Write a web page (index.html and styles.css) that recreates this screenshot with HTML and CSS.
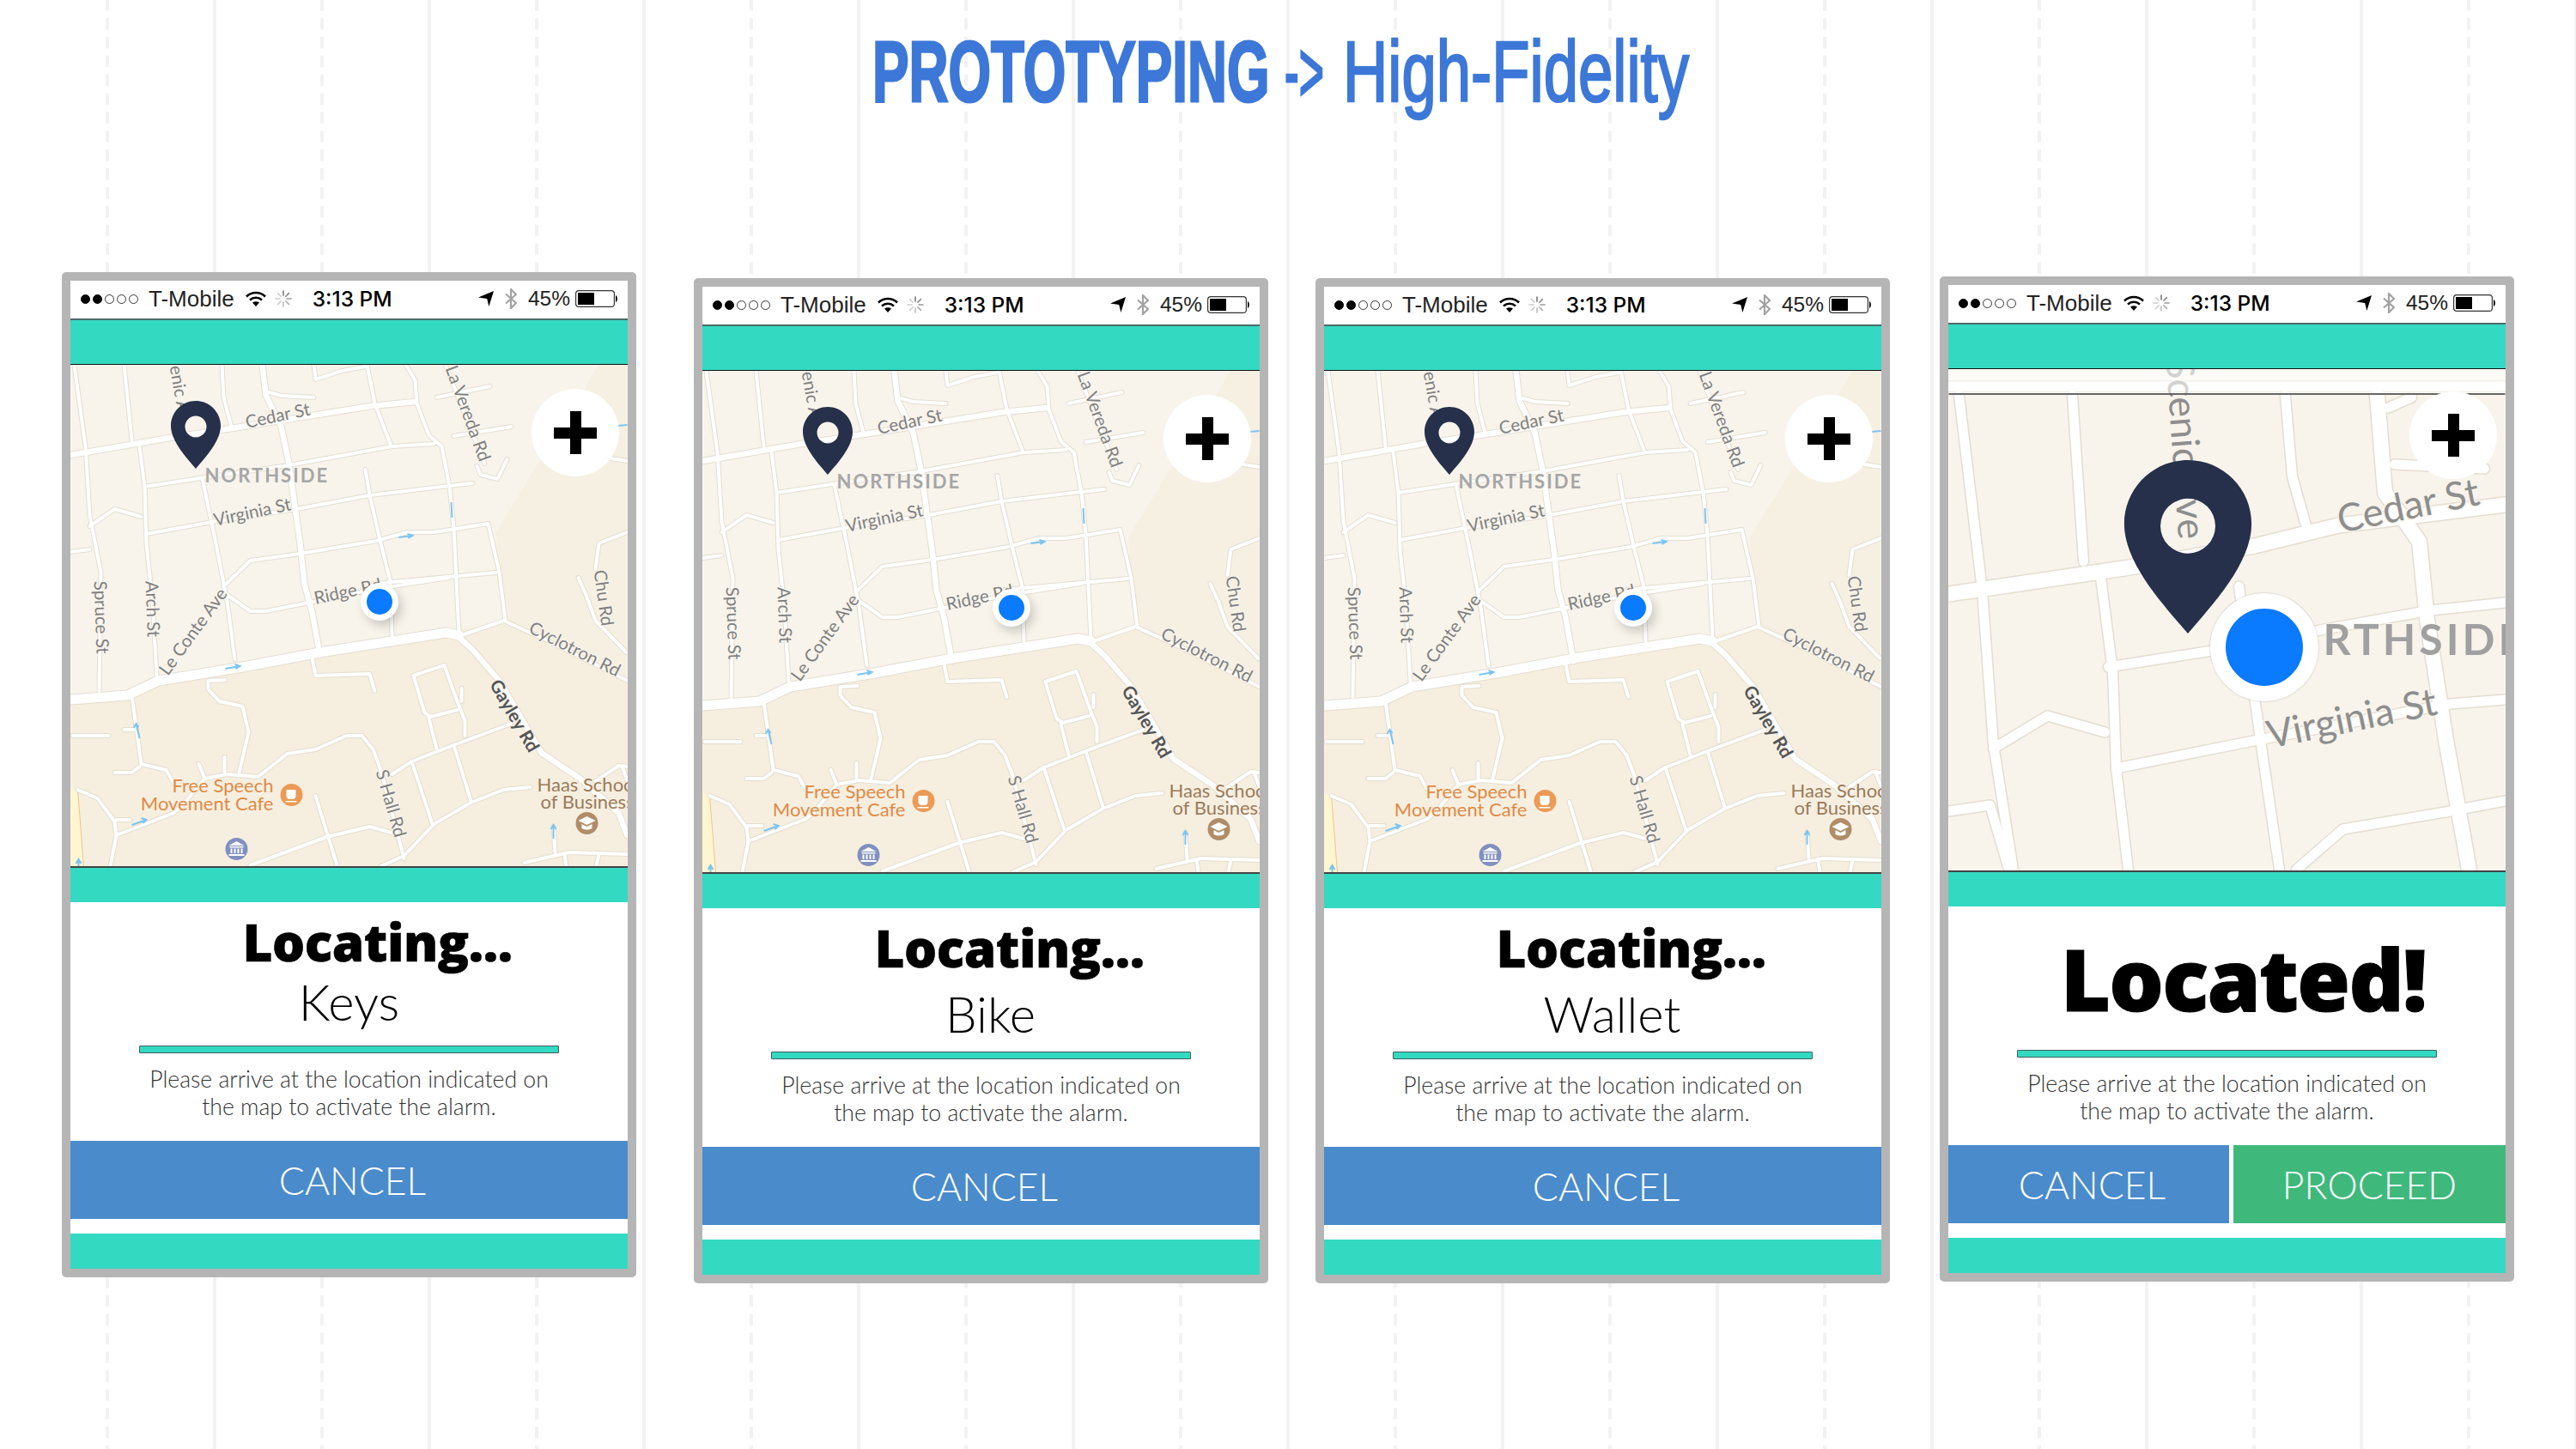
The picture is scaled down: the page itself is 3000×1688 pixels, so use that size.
FILE: index.html
```html
<!DOCTYPE html>
<html lang="en">
<head>
  <meta charset="UTF-8">
  <title>Prototyping - High-Fidelity</title>
  <link rel="stylesheet" href="styles.css">
</head>
<body>

  <!-- page background guides, and shared map + status bar drawings -->
  <svg class="guides" width="3000" height="1688">
    <defs>
      <pattern id="guide-tile" patternUnits="userSpaceOnUse" x="-2" y="-0.88" width="250" height="21.88">
        <rect x="0" y="0" width="4" height="21.88" fill="#f2f2f2"/>
        <rect x="125" y="0" width="4" height="13.5" fill="#f2f2f2"/>
      </pattern>
    </defs>
    <rect x="2" y="0" width="2998" height="1688" fill="url(#guide-tile)"/>
  </svg>

  <svg class="sprite">
    <defs>
      <symbol id="i-wifi" viewBox="0 0 24 18">
        <path d="M1 6.5C7 .5 17 .5 23 6.5" fill="none" stroke="#000" stroke-width="2.6"/>
        <path d="M5 10.5C9 6.8 15 6.8 19 10.5" fill="none" stroke="#000" stroke-width="2.6"/>
        <path d="M12 18L8 13.6C10.5 11.8 13.5 11.8 16 13.6Z"/>
      </symbol>
      <symbol id="i-spin" viewBox="0 0 20 20">
        <g stroke-width="1.6" stroke-linecap="round">
          <path d="M10 1V6" stroke="#777"/>
          <path d="M16.4 3.6L12.8 7.2" stroke="#888"/>
          <path d="M19 10H14" stroke="#999"/>
          <path d="M16.4 16.4L12.8 12.8" stroke="#aaa"/>
          <path d="M10 19V14" stroke="#bbb"/>
          <path d="M3.6 16.4L7.2 12.8" stroke="#ccc"/>
          <path d="M1 10H6" stroke="#ccc"/>
          <path d="M3.6 3.6L7.2 7.2" stroke="#ccc"/>
        </g>
      </symbol>
      <symbol id="i-arrow" viewBox="0 0 18 18">
        <path d="M0 7.4L18 0L12.4 18L10.2 9Z"/>
      </symbol>
      <symbol id="i-bt" viewBox="0 0 14 24">
        <path d="M1 6.5L13 17L7 23V1L13 7L1 17.5" fill="none" stroke="#a2a2a2" stroke-width="2.2"/>
      </symbol>
      <symbol id="i-battery" viewBox="0 0 50 20">
        <rect x=".6" y=".6" width="44.8" height="18.8" rx="3.5" fill="#fff" stroke="#333" stroke-width="1.2"/>
        <rect x="3" y="3" width="19" height="14" fill="#000"/>
        <path d="M47 6C49.500 6.500 49.500 13.500 47 14Z"/>
      </symbol>

      <!-- campus map at street zoom -->
      <g id="map-thin">
        <path d="M4 0L17 95L22 175L35 242L33 380"/>
        <path d="M62 0L71 88"/>
        <path d="M80 95L86 142L88 208L95 275L100 362"/>
        <path d="M176 0L178 38L187 72"/>
        <path d="M283 0L285 17L316 7L343 2"/>
        <path d="M345 0L354 45L372 92"/>
        <path d="M390 0L401 18L403 45L417 82L432 95L441 142L446 190L452 312"/>
        <path d="M86 142L151 132L254 117L374 95L423 92"/>
        <path d="M88 197L165 183L263 168L348 152L432 142L468 138"/>
        <path d="M153 132L169 208L182 275L191 343"/>
        <path d="M343 122L348 152L361 208L372 252L374 315"/>
        <path d="M178 258L209 228L267 220L356 205L392 195L423 195L486 185L499 242L506 298"/>
        <path d="M352 255L495 242"/>
        <path d="M178 265L209 287L227 287L272 278L350 262L440 248"/>
        <path d="M22 188L51 168L82 177"/>
        <path d="M0 218L22 215"/>
        <path d="M231 32L245 36L283 38"/>
        <path d="M426 38L488 25"/>
        <path d="M446 83L513 72"/>
        <path d="M437 2L482 115"/>
        <path d="M473 118L477 128L497 133L508 110"/>
        <path d="M622 108L648 112"/>
        <path d="M648 195L615 208L611 238"/>
        <path d="M591 248L600 268L611 298L647 335"/>
        <path d="M71 385L82 465L111 472L120 488"/>
        <path d="M2 432L44 432"/>
        <path d="M62 425L76 425"/>
        <path d="M51 475L71 475L80 468"/>
        <path d="M180 367L160 368L160 378L173 392L200 398L207 428L196 475"/>
        <path d="M281 342L285 362L348 360L354 380"/>
        <path d="M53 548L120 522L131 512L156 482L182 477L218 480L252 453L285 448L321 432L339 432L352 448L361 472L388 575"/>
        <path d="M149 465L156 482"/>
        <path d="M179 457L179 477"/>
        <path d="M399 362L435 350L450 392L459 415L459 432"/>
        <path d="M399 362L412 405L419 410L450 402"/>
        <path d="M417 412L426 447"/>
        <path d="M455 377L455 392"/>
        <path d="M513 418L446 443L397 462L374 477"/>
        <path d="M397 462L421 535"/>
        <path d="M446 443L466 508"/>
        <path d="M535 492L504 495L466 510L423 535L388 572L361 584"/>
        <path d="M209 583L298 550L348 538L374 545"/>
        <path d="M285 502L310 583"/>
        <path d="M8 495L31 505L51 532L53 548L46 584"/>
        <path d="M53 530L69 530"/>
        <path d="M528 580L580 568L647 570"/>
        <path d="M562 538L564 568"/>
        <path d="M575 570L577 584"/>
        <path d="M615 570L612 584"/>
        <path d="M611 485L638 467L648 468"/>
        <path d="M642 468L648 484"/>
        <path d="M455 315L504 298L557 322L648 368"/>
      </g>
      <g id="map-mid">
        <path d="M0 105L115 85L200 72L350 48L401 43"/>
        <path d="M223 0L227 35L245 72L254 115L267 208L272 255L281 288L290 338"/>
        <path d="M446 312L468 332L499 368L548 452L593 482L638 522L648 548"/>
      </g>
      <g id="map-wide">
        <path d="M0 390L66 385L102 368L200 352L290 335L437 312L452 315"/>
      </g>
      <g id="map-north">
        <rect width="648" height="584" fill="#f8f4ec"/>
        <path d="M615 0H648V368L557 322L504 298L495 195Z" fill="#f6f0e3"/>
        <path d="M0 390L66 385L102 368L200 352L290 335L437 312L504 298L557 322L648 368V584H0Z" fill="#f6efe0"/>
        <path d="M0 492L8 495L15 584H0Z" fill="#fdf6d0"/>
        <path d="M8 495L15 584" fill="none" stroke="#f4c48c" stroke-width="1"/>
        <use href="#map-thin" class="case case-thin"/>
        <use href="#map-mid" class="case case-mid"/>
        <use href="#map-wide" class="case case-wide"/>
        <use href="#map-thin" class="road road-thin"/>
        <use href="#map-mid" class="road road-mid"/>
        <use href="#map-wide" class="road road-wide"/>
        <g class="flow">
          <path d="M382 201L398 199M392 197L398 199L393 202"/>
          <path d="M443 160L444 178"/>
          <path d="M180 354L197 351M191 349L197 351L192 354"/>
          <path d="M80 435L76 418M73 423L76 418L79 422"/>
          <path d="M71 536L88 530M82 528L88 530L84 534"/>
          <path d="M562 552L562 536M559 541L562 536L565 541"/>
          <path d="M9 584L9 576M6 581L9 576L12 581"/>
          <path d="M637 71L648 70"/>
        </g>
        <text class="lbl" transform="translate(115 2) rotate(80)">enic A</text>
        <text class="lbl" transform="translate(205 74) rotate(-12)">Cedar St</text>
        <text class="lbl" transform="translate(168 188) rotate(-12)">Virginia St</text>
        <text class="lbl" transform="translate(436 4) rotate(70)">La Vereda Rd</text>
        <text class="lbl" transform="translate(27 252) rotate(88)">Spruce St</text>
        <text class="lbl" transform="translate(87 252) rotate(88)">Arch St</text>
        <text class="lbl" transform="translate(113 363) rotate(-54)">Le Conte Ave</text>
        <text class="lbl" transform="translate(285 279) rotate(-12)">Ridge Rd</text>
        <text class="lbl" transform="translate(609 240) rotate(82)">Chu Rd</text>
        <text class="lbl" transform="translate(532 311) rotate(27)">Cyclotron Rd</text>
        <text class="lbl lbl-dark" transform="translate(487 372) rotate(60)">Gayley Rd</text>
        <text class="lbl" transform="translate(355 474) rotate(74)">S Hall Rd</text>
        <text class="lbl lbl-area" x="156" y="137">NORTHSIDE</text>
        <text class="lbl lbl-cafe" x="236" y="498" text-anchor="end">Free Speech</text>
        <text class="lbl lbl-cafe" x="236" y="519" text-anchor="end">Movement Cafe</text>
        <text class="lbl lbl-school" x="543" y="497">Haas School</text>
        <text class="lbl lbl-school" x="547" y="517">of Business</text>
        <circle cx="257" cy="501" r="13" fill="#ec9a55"/>
        <path d="M251 495H262V502Q262 506 258 506H255Q251 506 251 502ZM250 508H263V509.500H250Z" fill="#fff"/>
        <circle cx="601" cy="534" r="13" fill="#b08d68"/>
        <path d="M601 526L611 531L601 536L591 531ZM595 535L601 538L607 535V540Q601 543 595 540Z" fill="#fff"/>
        <circle cx="193" cy="564" r="13" fill="#8090bf"/>
        <path d="M193 555L202 560H184ZM185 561H201V562.500H185ZM186 563.500H188V569H186ZM190 563.500H192V569H190ZM194 563.500H196V569H194ZM198 563.500H200V569H198ZM184 570H202V572H184Z" fill="#fff"/>
      </g>

      <!-- same streets, closer in -->
      <g id="close-thin">
        <path d="M12 1L39 228L52 407L75 553"/>
        <path d="M144 1L157 194"/>
        <path d="M177 213L191 322L195 435L209 553"/>
        <path d="M392 1L400 95L416 152"/>
        <path d="M338 223L365 416L385 553"/>
        <path d="M186 317L307 298L427 275L561 251L648 242"/>
        <path d="M195 435L360 402L584 360L648 355"/>
        <path d="M52 412L115 374L182 393"/>
        <path d="M0 485L48 478L70 553"/>
        <path d="M405 553L459 506L584 485L648 473"/>
        <path d="M519 81L624 86"/>
        <path d="M512 15L539 3"/>
        <path d="M0 -10L648 -10"/>
      </g>
      <g id="close-wide">
        <path d="M0 232L204 202L356 176L454 152L648 128"/>
        <path d="M499 1L508 114L548 171L557 261L579 402L606 553"/>
      </g>
      <g id="map-close">
        <rect width="648" height="584" fill="#f8f4ec"/>
        <g transform="translate(0 30)">
          <use href="#close-thin" class="case case-near"/>
          <use href="#close-wide" class="case case-far"/>
          <use href="#close-thin" class="road road-near"/>
          <use href="#close-wide" class="road road-far"/>
          <text class="lbl lbl-big" transform="translate(253 -42) rotate(86)">Scenic Ave</text>
          <text class="lbl lbl-big" transform="translate(456 161) rotate(-11.500)">Cedar St</text>
          <text class="lbl lbl-big" transform="translate(374 412) rotate(-11.500)">Virginia St</text>
          <text class="lbl lbl-area lbl-area-big" x="436" y="303">RTHSIDE</text>
        </g>
        <rect width="648" height="29" fill="#fff" opacity=".6"/>
        <rect y="28" width="648" height="2" fill="#666"/>
      </g>
    </defs>
  </svg>

  <main class="page">
    <h1 class="page-title">
      <span class="title-part title-strong">PROTOTYPING</span>
      <span class="title-part title-arrow">-&gt;</span>
      <span class="title-part title-light">High-Fidelity</span>
    </h1>

    <div class="phones">

      <section class="phone phone-keys">
        <div class="status-bar">
          <div class="status-group">
            <span class="signal"><i class="on"></i><i class="on"></i><i></i><i></i><i></i></span>
            <span class="carrier">T-Mobile</span>
            <svg class="ic-wifi"><use href="#i-wifi"/></svg>
            <svg class="ic-spin"><use href="#i-spin"/></svg>
            <span class="clock">3:13 PM</span>
          </div>
          <div class="status-group">
            <svg class="ic-arrow"><use href="#i-arrow"/></svg>
            <svg class="ic-bt"><use href="#i-bt"/></svg>
            <span class="percent">45%</span>
            <svg class="ic-battery"><use href="#i-battery"/></svg>
          </div>
        </div>
        <div class="band band-top"></div>
        <div class="map">
          <svg class="map-art" viewBox="0 0 648 584"><use href="#map-north"/></svg>
          <svg class="pin" viewBox="0 0 58 79"><path fill-rule="evenodd" d="M29 0C13 0 0 13 0 29C0 47 18 66 29 79C40 66 58 47 58 29C58 13 45 0 29 0ZM29 17.500a12.500 12.500 0 1 0 0 25a12.500 12.500 0 1 0 0-25Z"/></svg>
          <div class="here"></div>
          <div class="zoom-btn"><span class="plus"></span></div>
        </div>
        <div class="band band-mid"></div>
        <div class="details">
          <div class="details-head">
            <h2 class="state">Locating...</h2>
            <p class="item">Keys</p>
          </div>
          <div class="rule"></div>
          <p class="hint">Please arrive at the location indicated on<br>the map to activate the alarm.</p>
        </div>
        <div class="actions">
          <button class="btn btn-cancel">CANCEL</button>
        </div>
        <div class="gap"></div>
        <div class="band band-end"></div>
      </section>

      <section class="phone phone-bike">
        <div class="status-bar">
          <div class="status-group">
            <span class="signal"><i class="on"></i><i class="on"></i><i></i><i></i><i></i></span>
            <span class="carrier">T-Mobile</span>
            <svg class="ic-wifi"><use href="#i-wifi"/></svg>
            <svg class="ic-spin"><use href="#i-spin"/></svg>
            <span class="clock">3:13 PM</span>
          </div>
          <div class="status-group">
            <svg class="ic-arrow"><use href="#i-arrow"/></svg>
            <svg class="ic-bt"><use href="#i-bt"/></svg>
            <span class="percent">45%</span>
            <svg class="ic-battery"><use href="#i-battery"/></svg>
          </div>
        </div>
        <div class="band band-top"></div>
        <div class="map">
          <svg class="map-art" viewBox="0 0 648 584"><use href="#map-north"/></svg>
          <svg class="pin" viewBox="0 0 58 79"><path fill-rule="evenodd" d="M29 0C13 0 0 13 0 29C0 47 18 66 29 79C40 66 58 47 58 29C58 13 45 0 29 0ZM29 17.500a12.500 12.500 0 1 0 0 25a12.500 12.500 0 1 0 0-25Z"/></svg>
          <div class="here"></div>
          <div class="zoom-btn"><span class="plus"></span></div>
        </div>
        <div class="band band-mid"></div>
        <div class="details">
          <div class="details-head">
            <h2 class="state">Locating...</h2>
            <p class="item item-shifted">Bike</p>
          </div>
          <div class="rule"></div>
          <p class="hint">Please arrive at the location indicated on<br>the map to activate the alarm.</p>
        </div>
        <div class="actions">
          <button class="btn btn-cancel">CANCEL</button>
        </div>
        <div class="gap"></div>
        <div class="band band-end"></div>
      </section>

      <section class="phone phone-wallet">
        <div class="status-bar">
          <div class="status-group">
            <span class="signal"><i class="on"></i><i class="on"></i><i></i><i></i><i></i></span>
            <span class="carrier">T-Mobile</span>
            <svg class="ic-wifi"><use href="#i-wifi"/></svg>
            <svg class="ic-spin"><use href="#i-spin"/></svg>
            <span class="clock">3:13 PM</span>
          </div>
          <div class="status-group">
            <svg class="ic-arrow"><use href="#i-arrow"/></svg>
            <svg class="ic-bt"><use href="#i-bt"/></svg>
            <span class="percent">45%</span>
            <svg class="ic-battery"><use href="#i-battery"/></svg>
          </div>
        </div>
        <div class="band band-top"></div>
        <div class="map">
          <svg class="map-art" viewBox="0 0 648 584"><use href="#map-north"/></svg>
          <svg class="pin" viewBox="0 0 58 79"><path fill-rule="evenodd" d="M29 0C13 0 0 13 0 29C0 47 18 66 29 79C40 66 58 47 58 29C58 13 45 0 29 0ZM29 17.500a12.500 12.500 0 1 0 0 25a12.500 12.500 0 1 0 0-25Z"/></svg>
          <div class="here"></div>
          <div class="zoom-btn"><span class="plus"></span></div>
        </div>
        <div class="band band-mid"></div>
        <div class="details">
          <div class="details-head">
            <h2 class="state">Locating...</h2>
            <p class="item item-shifted">Wallet</p>
          </div>
          <div class="rule"></div>
          <p class="hint">Please arrive at the location indicated on<br>the map to activate the alarm.</p>
        </div>
        <div class="actions">
          <button class="btn btn-cancel">CANCEL</button>
        </div>
        <div class="gap"></div>
        <div class="band band-end"></div>
      </section>

      <section class="phone phone-found">
        <div class="status-bar">
          <div class="status-group">
            <span class="signal"><i class="on"></i><i class="on"></i><i></i><i></i><i></i></span>
            <span class="carrier">T-Mobile</span>
            <svg class="ic-wifi"><use href="#i-wifi"/></svg>
            <svg class="ic-spin"><use href="#i-spin"/></svg>
            <span class="clock">3:13 PM</span>
          </div>
          <div class="status-group">
            <svg class="ic-arrow"><use href="#i-arrow"/></svg>
            <svg class="ic-bt"><use href="#i-bt"/></svg>
            <span class="percent">45%</span>
            <svg class="ic-battery"><use href="#i-battery"/></svg>
          </div>
        </div>
        <div class="band band-top"></div>
        <div class="map map-near">
          <svg class="map-art" viewBox="0 0 648 584"><use href="#map-close"/></svg>
          <svg class="pin" viewBox="0 0 58 79"><path fill-rule="evenodd" d="M29 0C13 0 0 13 0 29C0 47 18 66 29 79C40 66 58 47 58 29C58 13 45 0 29 0ZM29 17.500a12.500 12.500 0 1 0 0 25a12.500 12.500 0 1 0 0-25Z"/></svg>
          <div class="here"></div>
          <div class="zoom-btn"><span class="plus"></span></div>
        </div>
        <div class="band band-mid"></div>
        <div class="details">
          <div class="details-head">
            <h2 class="state state-done">Located!</h2>
          </div>
          <div class="rule"></div>
          <p class="hint">Please arrive at the location indicated on<br>the map to activate the alarm.</p>
        </div>
        <div class="actions">
          <button class="btn btn-cancel">CANCEL</button>
          <button class="btn btn-proceed">PROCEED</button>
        </div>
        <div class="gap"></div>
        <div class="band band-end"></div>
      </section>

    </div>
  </main>

</body>
</html>
```

FILE: styles.css
```css
* {
  box-sizing: border-box;
}

body {
  margin: 0;
  width: 3000px;
  height: 1688px;
  overflow: hidden;
  background-color: #ffffff;
  font-family: "Lato", "Open Sans", sans-serif;
  color: #000;
}

.guides {
  position: absolute;
  top: 0;
  left: 0;
}

.sprite {
  position: absolute;
  width: 0;
  height: 0;
}

.page {
  position: relative;
}

/* title */
.page-title {
  display: flex;
  justify-content: flex-start;
  gap: 20px;
  height: 317px;
  margin: 0;
  padding: 38px 0 0 1016px;
  color: #3d78d8;
  font-family: "Liberation Sans", Arial, sans-serif;
  line-height: 90px;
}

.title-part {
  display: block;
  white-space: nowrap;
  transform-origin: left center;
  font-size: 100px;
}

.title-strong {
  width: 460px;
  font-weight: 700;
  -webkit-text-stroke: 3px #3d78d8;
  transform: scaleX(0.637);
}

.title-arrow {
  width: 48px;
  font-weight: 400;
  -webkit-text-stroke: 3px #3d78d8;
  transform: scaleX(0.5);
}

.title-light {
  width: 399px;
  font-weight: 400;
  -webkit-text-stroke: 2.5px #3d78d8;
  transform: scaleX(0.725);
}

/* phones row */
.phones {
  display: flex;
  align-items: flex-start;
  padding-left: 72px;
}

.phone {
  display: flex;
  flex-direction: column;
  flex: none;
  width: 669px;
  height: 1171px;
  border: 10px solid #b5b5b5;
  border-radius: 5px;
  background: #fff;
}

.phone-bike {
  margin: 7px 0 0 67px;
}

.phone-wallet {
  margin: 7px 0 0 55px;
}

.phone-found {
  margin: 5px 0 0 58px;
}

/* status bar */
.status-bar {
  display: flex;
  justify-content: space-between;
  align-items: center;
  height: 46px;
  padding: 0 11px 2px 12px;
  border-bottom: 2px solid #4d6b69;
  font-family: "Liberation Sans", Arial, sans-serif;
  font-size: 26px;
  background: #fff;
}

.status-group {
  display: flex;
  align-items: center;
}

.signal {
  display: flex;
  gap: 3px;
}

.signal i {
  width: 11px;
  height: 11px;
  border: 1px solid #333;
  border-radius: 50%;
}

.signal i.on {
  background: #000;
  border-color: #000;
}

.carrier {
  margin-left: 12px;
  color: #222;
}

.ic-wifi {
  width: 24px;
  height: 18px;
  margin-left: 13px;
}

.ic-spin {
  width: 20px;
  height: 20px;
  margin-left: 10px;
}

.clock {
  margin-left: 24px;
  font-family: "Inter", "Liberation Sans", sans-serif;
  font-size: 24.5px;
  font-weight: 500;
}

.ic-arrow {
  width: 18px;
  height: 18px;
}

.ic-bt {
  width: 14px;
  height: 24px;
  margin-left: 13px;
}

.percent {
  margin-left: 13px;
  color: #222;
  font-size: 24.5px;
}

.ic-battery {
  width: 50px;
  height: 20px;
  margin-left: 6px;
}

/* teal bands */
.band {
  background: #33d9c1;
}

.band-top {
  height: 52px;
  border-bottom: 1px solid #111;
}

.band-mid {
  height: 42px;
  border-top: 2px solid #444;
}

.band-end {
  height: 41px;
}

/* map */
.map {
  position: relative;
  height: 584px;
  overflow: hidden;
}

.map-art {
  display: block;
  width: 100%;
  height: 584px;
}

.case,
.road {
  fill: none;
  stroke-linecap: round;
  stroke-linejoin: round;
}

.case {
  stroke: #e4ddd0;
}

.road {
  stroke: #fff;
}

.case-thin { stroke-width: 6px; }
.road-thin { stroke-width: 4px; }
.case-mid { stroke-width: 8.5px; }
.road-mid { stroke-width: 6.5px; }
.case-wide { stroke-width: 13px; }
.road-wide { stroke-width: 11px; }
.case-near { stroke-width: 14px; }
.road-near { stroke-width: 11px; }
.case-far { stroke-width: 20px; }
.road-far { stroke-width: 17px; }

.flow {
  fill: none;
  stroke: #7cc4f0;
  stroke-width: 2px;
}

.lbl {
  font-family: "Lato", "Open Sans", sans-serif;
  font-size: 20.5px;
  fill: #808080;
  stroke: #f8f4ec;
  stroke-width: 2px;
  paint-order: stroke;
}

.lbl-dark {
  font-size: 21px;
  font-weight: 700;
  fill: #555;
}

.lbl-area {
  font-size: 22px;
  font-weight: 700;
  letter-spacing: 2px;
  fill: #a6a6a6;
}

.lbl-cafe {
  font-size: 22px;
  fill: #e08a45;
  stroke: #f6efe0;
}

.lbl-school {
  font-size: 22px;
  fill: #9b7a5a;
  stroke: #f6efe0;
}

.lbl-big {
  font-size: 45px;
  fill: #8e8e8e;
  stroke-width: 3px;
}

.lbl-area-big {
  font-size: 50px;
  letter-spacing: 4px;
  fill: #a0a0a0;
}

.pin {
  position: absolute;
  top: 42px;
  left: 117px;
  width: 58px;
  height: 79px;
  fill: #26304a;
}

.here {
  position: absolute;
  top: 254px;
  left: 338px;
  width: 44px;
  height: 44px;
  border: 7px solid #fff;
  border-radius: 50%;
  background: #0a7aff;
  box-shadow: 4px 6px 12px rgba(0, 0, 0, 0.18);
}

.zoom-btn {
  position: absolute;
  top: 28px;
  left: 537px;
  display: flex;
  justify-content: center;
  align-items: center;
  width: 102px;
  height: 102px;
  border-radius: 50%;
  background: #fff;
}

.plus {
  width: 50px;
  height: 50px;
  background:
    linear-gradient(#000, #000) center / 100% 13px no-repeat,
    linear-gradient(#000, #000) center / 13px 100% no-repeat;
}

.map-near .pin {
  top: 106px;
  left: 203px;
  width: 152px;
  height: 202px;
}

.map-near .here {
  top: 261px;
  left: 305px;
  width: 126px;
  height: 126px;
  border-width: 18px;
  box-shadow: 0 0 2px rgba(0, 0, 0, 0.3);
}

.map-near .zoom-btn {
  top: 26px;
  left: 537px;
}

/* text panel */
.details {
  height: 278px;
  text-align: center;
}

.details-head {
  height: 167px;
  padding-top: 11px;
}

.state {
  margin: 0;
  padding-left: 66px;
  font-family: "Open Sans", "Lato", sans-serif;
  font-size: 60px;
  font-weight: 800;
  letter-spacing: -0.4px;
  line-height: 70px;
  -webkit-text-stroke: 0.6px #000;
}

.state-done {
  padding: 17px 0 0 38px;
  font-size: 100px;
  letter-spacing: -1.7px;
  line-height: 110px;
  -webkit-text-stroke: 1px #000;
}

.item {
  margin: 0;
  font-size: 58px;
  font-weight: 300;
  line-height: 70px;
}

.item-shifted {
  margin-top: 7px;
  padding-left: 22px;
}

.rule {
  width: 489px;
  height: 9px;
  margin: 0 auto;
  border: 1px solid #3a5f5c;
  border-radius: 1px;
  background: #33d9c1;
}

.hint {
  margin: 14px 0 0;
  color: #333;
  font-size: 26.6px;
  font-weight: 300;
  line-height: 32px;
}

/* buttons */
.actions {
  display: flex;
  gap: 5px;
  height: 91px;
}

.btn {
  flex: 1;
  height: 91px;
  padding: 0 0 0 8px;
  border: 0;
  color: #fff;
  font-family: "Lato", "Open Sans", sans-serif;
  font-size: 44.5px;
  font-weight: 300;
}

.btn-cancel {
  background: #4a8bcb;
}

.btn-proceed {
  flex: none;
  width: 317px;
  padding-left: 0;
  background: #3fb97b;
}

.gap {
  height: 17px;
}
```
